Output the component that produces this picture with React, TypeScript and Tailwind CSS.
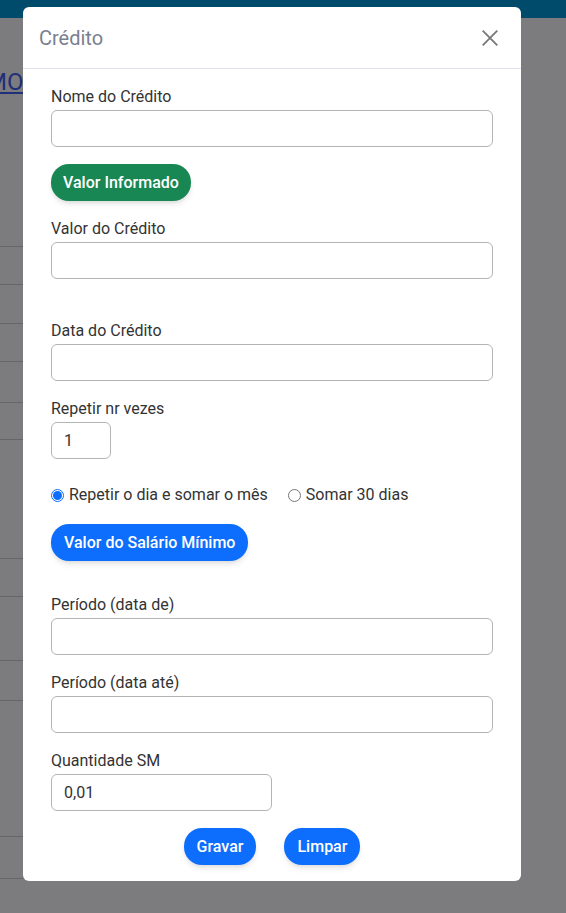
import React from 'react';

const font = { fontFamily: 'Roboto, "Liberation Sans", sans-serif' };

// background table lines behind the overlay
const bgLines = [246, 284, 323, 361, 402, 439, 558, 596, 660, 700, 836, 878];

function Field({ label, value = '', width = 'w-full', gap = 'mb-[16px]' }: { label: string; value?: string; width?: string; gap?: string }) {
  return (
    <div className={gap}>
      <label className="block text-[16px] leading-[24px] text-[#333] mb-px">{label}</label>
      <input
        readOnly
        value={value}
        className={`${width} h-[37px] rounded-[6px] border border-[#b4b4b4] bg-white px-[12px] text-[16px] text-[#333] outline-none`}
      />
    </div>
  );
}

export default function App() {
  return (
    <div className="relative w-[566px] h-[913px] overflow-hidden bg-[#7c7c7e]" style={font}>
      {/* page behind the overlay */}
      <div className="absolute inset-x-0 top-0 h-[18px] bg-[#004a6b]" />
      <div className="absolute left-0 top-[66px] w-[23px] overflow-hidden">
        <div className="ml-[-14px] text-[24px] leading-[32px] text-[#1f2f7a] underline whitespace-nowrap">MO</div>
      </div>
      {bgLines.map(y => (
        <div key={y} className="absolute left-0 w-[23px] h-px bg-[#666668]" style={{ top: y }} />
      ))}

      {/* modal */}
      <div className="absolute left-[23px] top-[7px] w-[498px] rounded-[6px] bg-white">
        <div className="flex items-center justify-between h-[62px] px-[16px] border-b border-[#e2e2ee]">
          <h2 className="text-[20px] text-[#7a7f8f]">Crédito</h2>
          <svg width="18" height="18" viewBox="0 0 16 16" className="mr-[6px]">
            <path d="M1.5 1.5 L14.5 14.5 M14.5 1.5 L1.5 14.5" stroke="#777" strokeWidth="1.6" />
          </svg>
        </div>

        <div className="px-[28px] pt-[16px] pb-[16px]">
          <Field label="Nome do Crédito" gap="mb-[17px]" />
          <button className="h-[37px] px-[12px] rounded-[18px] bg-[#198754] text-white text-[16px] font-medium shadow-md mb-[16px]">
            Valor Informado
          </button>
          <Field label="Valor do Crédito" gap="mb-[40px]" />
          <Field label="Data do Crédito" />
          <Field label="Repetir nr vezes" value="1" width="w-[60px]" gap="mb-[24px]" />

          <div className="flex items-center h-[24px] text-[16px] text-[#333] mb-[17px]">
            <span className="w-[13px] h-[13px] rounded-full border border-[#0d6efd] flex items-center justify-center mr-[5px]">
              <span className="w-[9px] h-[9px] rounded-full bg-[#0d6efd]" />
            </span>
            <span>Repetir o dia e somar o mês</span>
            <span className="w-[13px] h-[13px] rounded-full border border-[#767676] ml-[20px] mr-[5px]" />
            <span>Somar 30 dias</span>
          </div>

          <button className="h-[37px] px-[13px] rounded-[18px] bg-[#0d6efd] text-white text-[16px] font-medium shadow-md mb-[32px]">
            Valor do Salário Mínimo
          </button>

          <Field label="Período (data de)" />
          <Field label="Período (data até)" />
          <Field label="Quantidade SM" value="0,01" width="w-[221px]" gap="mb-[17px]" />

          <div className="flex justify-center gap-[28px]">
            <button className="h-[37px] px-[13px] rounded-[18px] bg-[#0d6efd] text-white text-[16px] font-medium shadow-md">Gravar</button>
            <button className="h-[37px] px-[13px] rounded-[18px] bg-[#0d6efd] text-white text-[16px] font-medium shadow-md">Limpar</button>
          </div>
        </div>
      </div>
    </div>
  );
}
